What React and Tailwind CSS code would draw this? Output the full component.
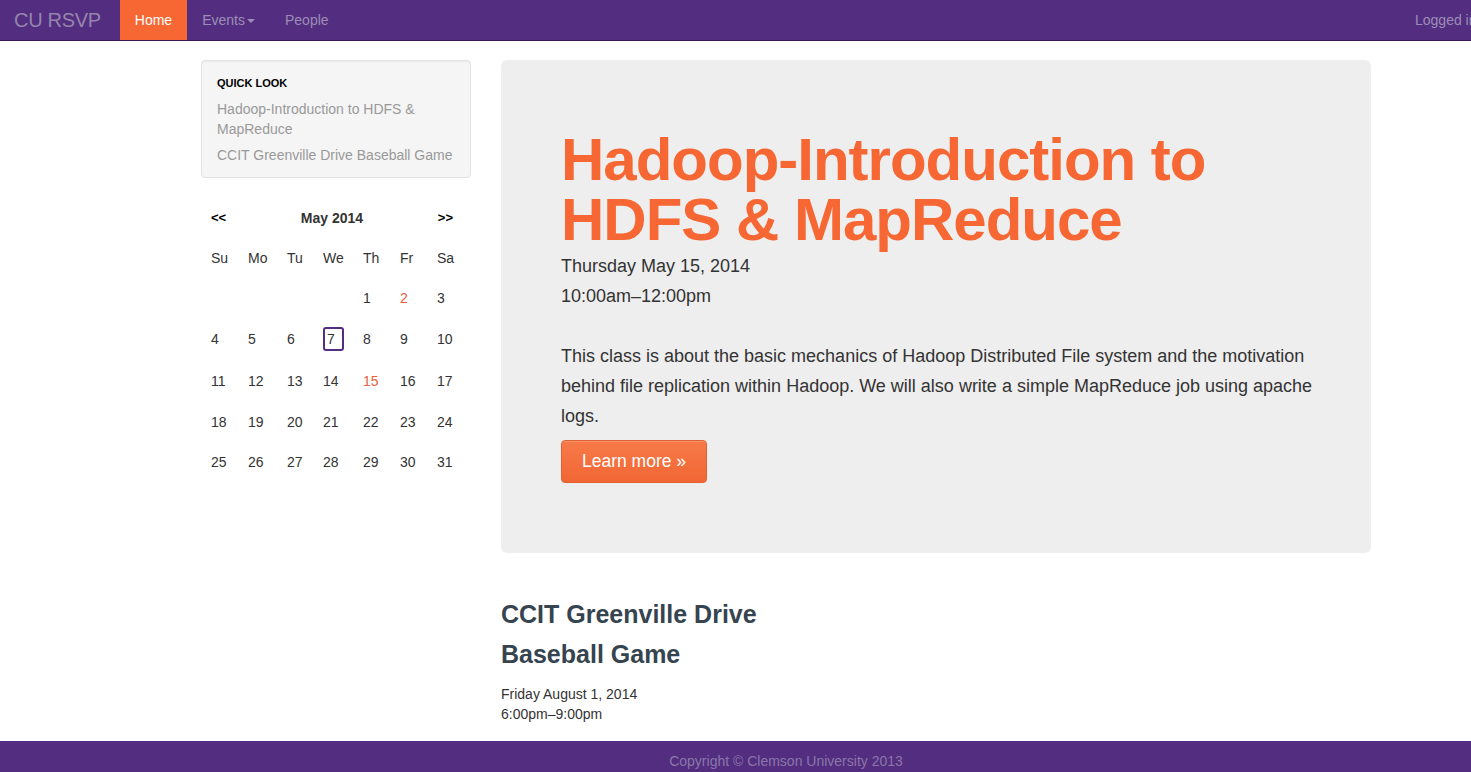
export default function App() {
  const cols = "grid grid-cols-[37px_39px_36px_40px_37px_37px_37px]";
  const weeks = [
    ["", "", "", "", "1", "2", "3"],
    ["4", "5", "6", "7", "8", "9", "10"],
    ["11", "12", "13", "14", "15", "16", "17"],
    ["18", "19", "20", "21", "22", "23", "24"],
    ["25", "26", "27", "28", "29", "30", "31"],
  ];
  const rowH = ["h-[40px]", "h-[42px]", "h-[42px]", "h-[40px]", "h-[40px]"];
  return (
    <div className="w-full overflow-hidden bg-white" style={{ fontFamily: '"Liberation Sans", Arial, sans-serif' }}>
      <div className="w-[1572px] text-[14px] leading-[20px] text-[#333]">
        {/* Navbar */}
        <div className="flex h-[41px] items-stretch border-b border-[#35194f] bg-[#522d80]">
          <div className="flex items-center pl-[14px] pr-[19px] text-[20px] tracking-[-0.3px] text-[#9585ad]">CU RSVP</div>
          <div className="flex items-center bg-[#f66733] px-[15px] text-white">Home</div>
          <div className="flex items-center px-[15px] text-[#9d8db6]">
            Events
            <span className="ml-[2px] mt-[2px] inline-block h-0 w-0 border-x-[4px] border-t-[4px] border-x-transparent border-t-[#9d8db6]"></span>
          </div>
          <div className="flex items-center px-[15px] text-[#9d8db6]">People</div>
          <div className="ml-auto flex w-[157px] items-center whitespace-nowrap text-[#9d8db6]">Logged in as admin</div>
        </div>

        {/* Container */}
        <div className="ml-[201px] flex w-[1170px] gap-[30px] pt-[19px]">
          {/* Sidebar */}
          <div className="w-[270px] shrink-0">
            <div className="rounded-[4px] border border-[#e3e3e3] bg-[#f5f5f5] px-[15px] pb-[12px] pt-[12px] shadow-[inset_0_1px_1px_rgba(0,0,0,0.05)]">
              <div className="text-[11px] font-bold uppercase leading-[20px] text-black">Quick Look</div>
              <div className="mt-[6px] text-[#999]">
                <div>Hadoop-Introduction to HDFS &amp;<br />MapReduce</div>
                <div className="mt-[6px]">CCIT Greenville Drive Baseball Game</div>
              </div>
            </div>

            {/* Calendar */}
            <div className="mt-[30px]">
              <div className="flex h-[20px] items-center justify-between pl-[10px] pr-[18px] text-[13px] font-bold">
                <span className="text-black">&lt;&lt;</span>
                <span className="text-[14px] text-[#333]">May 2014</span>
                <span className="text-black">&gt;&gt;</span>
              </div>
              <div className={`${cols} mt-[10px] h-[40px] items-center text-[14px] text-[#333]`}>
                {["Su", "Mo", "Tu", "We", "Th", "Fr", "Sa"].map((d) => (
                  <div key={d} className="pl-[10px]">{d}</div>
                ))}
              </div>
              {weeks.map((w, i) => (
                <div key={i} className={`${cols} ${rowH[i]} items-center text-[14px] text-[#333]`}>
                  {w.map((d, j) => (
                    <div key={j} className="pl-[10px]">
                      {d === "7" ? (
                        <span className="flex h-[24px] w-[21px] items-center rounded-[3px] border-2 border-[#522d80] pl-[2px]">7</span>
                      ) : d === "2" || d === "15" ? (
                        <span className="text-[#e8603c]">{d}</span>
                      ) : (
                        d
                      )}
                    </div>
                  ))}
                </div>
              ))}
            </div>
          </div>

          {/* Main */}
          <div className="w-[870px] shrink-0">
            <div className="rounded-[6px] bg-[#eeeeee] py-[60px] pl-[60px] pr-[50px]">
              <h1 className="mt-[10px] text-[60px] font-bold leading-[60px] tracking-[-1px] text-[#f66733]">
                Hadoop-Introduction to HDFS &amp; MapReduce
              </h1>
              <p className="mt-[1px] text-[18px] leading-[30px] text-[#333]">
                Thursday May 15, 2014<br />10:00am–12:00pm
              </p>
              <p className="mt-[30px] text-[18px] leading-[30px] text-[#333]">
                This class is about the basic mechanics of Hadoop Distributed File system and the motivation behind file replication within Hadoop. We will also write a simple MapReduce job using apache logs.
              </p>
              <div className="mt-[9px] mb-[10px]">
                <span className="inline-block rounded-[4px] border border-[#e0602f] bg-gradient-to-b from-[#f77a48] to-[#f16634] px-[20px] py-[11px] text-[17.5px] leading-[19px] text-white shadow-[inset_0_1px_0_rgba(255,255,255,0.2)]">
                  Learn more »
                </span>
              </div>
            </div>

            <div className="mt-[41px] w-[300px]">
              <h2 className="text-[25px] font-bold leading-[40px] text-[#36444f]">CCIT Greenville Drive Baseball Game</h2>
              <p className="mt-[10px] text-[14px] leading-[20px] text-[#333]">
                Friday August 1, 2014<br />6:00pm–9:00pm
              </p>
            </div>
          </div>
        </div>

        {/* Footer */}
        <div className="mt-[17px] h-[31px] bg-[#522d80]">
          <div className="ml-[201px] flex h-full w-[1170px] items-end justify-center pb-[1px] text-[14px] text-[#8b77a8]">
            Copyright © Clemson University 2013
          </div>
        </div>
      </div>
    </div>
  );
}
